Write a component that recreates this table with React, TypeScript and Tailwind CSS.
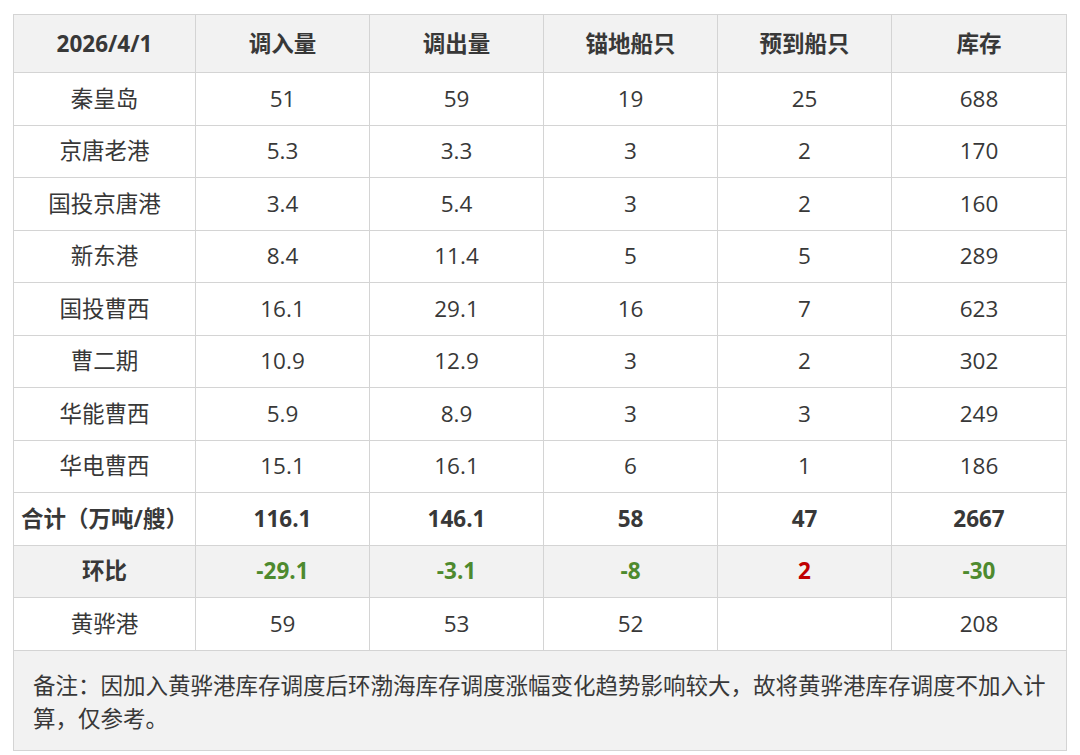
import React from "react";

const rows: [string, string, string, string, string, string][] = [
  ["秦皇岛", "51", "59", "19", "25", "688"],
  ["京唐老港", "5.3", "3.3", "3", "2", "170"],
  ["国投京唐港", "3.4", "5.4", "3", "2", "160"],
  ["新东港", "8.4", "11.4", "5", "5", "289"],
  ["国投曹西", "16.1", "29.1", "16", "7", "623"],
  ["曹二期", "10.9", "12.9", "3", "2", "302"],
  ["华能曹西", "5.9", "8.9", "3", "3", "249"],
  ["华电曹西", "15.1", "16.1", "6", "1", "186"],
];

const cell = "border border-[#d4d4d4] text-center align-middle h-[52.5px] p-0";

export default function App() {
  return (
    <div
      className="w-[1080px] h-[755px] bg-white pl-[13px] pt-[14px] text-[#383838]"
      style={{ fontFamily: '"Open Sans", "Noto Sans CJK SC", sans-serif' }}
    >
      <table className="border-collapse table-fixed w-[1053px] text-[22.5px]">
        <colgroup>
          <col className="w-[182px]" />
          <col className="w-[174px]" />
          <col className="w-[174px]" />
          <col className="w-[174px]" />
          <col className="w-[174px]" />
          <col className="w-[175px]" />
        </colgroup>
        <thead>
          <tr className="bg-[#f2f2f2] font-bold">
            {["2026/4/1", "调入量", "调出量", "锚地船只", "预到船只", "库存"].map((h) => (
              <td key={h} className={`${cell} h-[58px]`}>
                {h}
              </td>
            ))}
          </tr>
        </thead>
        <tbody>
          {rows.map((r) => (
            <tr key={r[0]} className="bg-white">
              {r.map((v, i) => (
                <td key={i} className={cell}>
                  {v}
                </td>
              ))}
            </tr>
          ))}
          <tr className="bg-white font-bold">
            {["合计（万吨/艘）", "116.1", "146.1", "58", "47", "2667"].map((v, i) => (
              <td key={i} className={cell}>
                {v}
              </td>
            ))}
          </tr>
          <tr className="bg-[#f2f2f2] font-bold">
            <td className={cell}>环比</td>
            <td className={`${cell} text-[#4e8a2e]`}>-29.1</td>
            <td className={`${cell} text-[#4e8a2e]`}>-3.1</td>
            <td className={`${cell} text-[#4e8a2e]`}>-8</td>
            <td className={`${cell} text-[#c00000]`}>2</td>
            <td className={`${cell} text-[#4e8a2e]`}>-30</td>
          </tr>
          <tr className="bg-white">
            {["黄骅港", "59", "53", "52", "", "208"].map((v, i) => (
              <td key={i} className={cell}>
                {v}
              </td>
            ))}
          </tr>
          <tr className="bg-[#f2f2f2]">
            <td
              colSpan={6}
              className="border border-[#d4d4d4] text-left align-top h-[100px] pl-[19px] pr-[10px] pt-[18px] leading-[33px] text-[22.5px]"
            >
              备注：因加入黄骅港库存调度后环渤海库存调度涨幅变化趋势影响较大，故将黄骅港库存调度不加入计算，仅参考。
            </td>
          </tr>
        </tbody>
      </table>
    </div>
  );
}
